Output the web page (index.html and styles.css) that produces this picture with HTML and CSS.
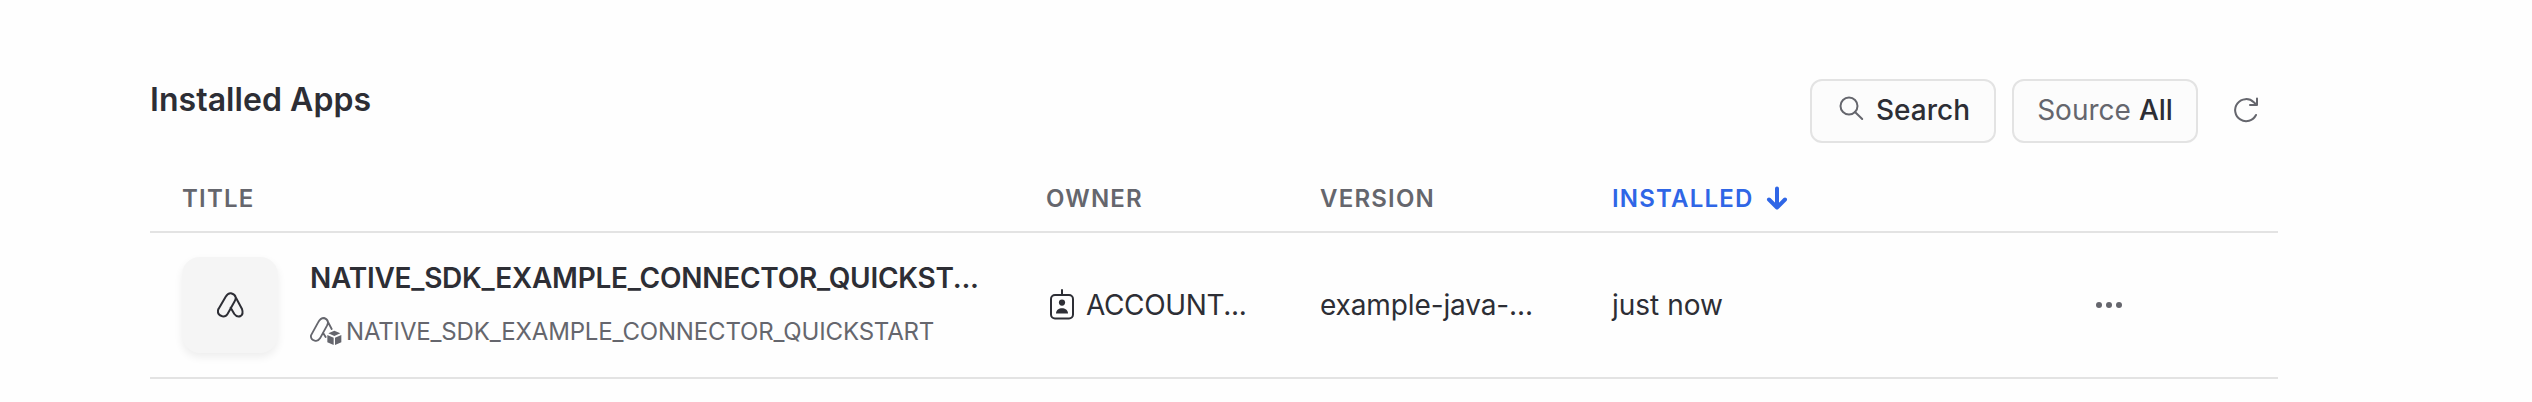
FILE: index.html
```html
<!DOCTYPE html>
<html lang="en">
<head>
<meta charset="utf-8">
<title>Installed Apps</title>
<link rel="stylesheet" href="styles.css">
</head>
<body>
<main class="page">
  <header class="toolbar">
    <h1 class="heading">Installed Apps</h1>
    <div class="actions">
      <button class="btn search"><svg class="icon-search" viewBox="0 0 28 28"><circle cx="11" cy="11" r="8.5"/><path d="M17 17l7.2 7"/></svg><span>Search</span></button>
      <button class="btn"><span class="muted">Source</span> <span>All</span></button>
      <button class="refresh" aria-label="Refresh"><svg class="icon-refresh" viewBox="0 0 28 28"><path d="M24 19A11 11 0 1 1 21.8 6.2L24.5 8.8M25 2.5V9H18"/></svg></button>
    </div>
  </header>
  <section class="table">
    <div class="row head">
      <div class="cell">TITLE</div>
      <div class="cell">OWNER</div>
      <div class="cell">VERSION</div>
      <div class="cell sorted"><span>INSTALLED</span><svg class="icon-arrow" viewBox="0 0 24 26"><path d="M12 3.5V22M4 14.5l8 8 8-8"/></svg></div>
      <div class="cell"></div>
    </div>
    <div class="row item">
      <div class="cell app">
        <div class="tile"><svg class="icon-app" viewBox="0 0 96 96"><path d="M35 23Q42 12 51 13Q63 16 65 25Q66 30 62 37L41 74Q35 84 25 82Q10 78 12 65Q12 62 14 59Z M65 25L84 60Q89 75 80 81Q69 86 61 75L50 56"/></svg></div>
        <div class="names">
          <div class="name">NATIVE_SDK_EXAMPLE_CONNECTOR_QUICKST...</div>
          <div class="db"><svg class="icon-pkg" viewBox="0 0 96 90"><path class="line" d="M24 17Q31 3 42 3Q52 6 54 15Q54 20 51 26L30 64Q24 74 14 71Q1 67 3 55Z M54 15L65 36M39 47L47 60"/><path class="solid" d="M55 49L73 41L91 49L73 57Z M52 54L71 62V84L52 76Z M75 62L94 54V76L75 84Z"/></svg><span>NATIVE_SDK_EXAMPLE_CONNECTOR_QUICKSTART</span></div>
        </div>
      </div>
      <div class="cell owner"><svg class="icon-badge" viewBox="0 0 28 32"><path class="line" d="M13 1v5"/><rect class="line" x="2" y="6" width="22" height="23.5" rx="4"/><circle class="solid" cx="13" cy="13.6" r="3.1"/><path class="solid" d="M7 24.5c0-7 12-7 12 0z"/></svg><span class="owner-name">ACCOUNT...</span></div>
      <div class="cell version">example-java-...</div>
      <div class="cell">just now</div>
      <div class="cell more"><svg class="icon-more" viewBox="0 0 26 6"><circle cx="3" cy="3" r="3"/><circle cx="13" cy="3" r="3"/><circle cx="23" cy="3" r="3"/></svg></div>
    </div>
  </section>
</main>
</body>
</html>
```
FILE: styles.css
```css
* { box-sizing: border-box; }
html, body { margin: 0; height: 402px; background: #fefefe; }
body { font-family: Inter, "Liberation Sans", sans-serif; color: #2d2e35; font-size: 28px; }
button { font: inherit; color: inherit; padding: 0; }
svg { display: block; flex: none; fill: none; stroke: currentColor; stroke-linecap: round; stroke-linejoin: round; }
.page { padding: 79px 254px 0 150px; }
.toolbar { display: flex; justify-content: space-between; height: 86px; }
.heading { margin: 1px 0 0; font-size: 32px; line-height: 40px; font-weight: 600; letter-spacing: .05px; }
.actions { display: flex; height: 64px; }
.btn { display: flex; align-items: center; justify-content: center; gap: 8px; width: 186px; margin-right: 16px; line-height: 36px; padding-bottom: 2px; font-weight: 500; background: #fcfcfc; border: 2px solid #e3e3e3; border-radius: 12px; }
.search { padding-left: 2px; }
.muted { color: #65666d; font-weight: 400; }
.icon-search { width: 28px; height: 28px; stroke-width: 2; color: #65666d; margin: -2px 2px 0 0; }
.refresh { border: 0; background: none; width: 64px; display: flex; align-items: center; justify-content: center; padding-bottom: 2px; }
.icon-refresh { width: 28px; height: 28px; stroke-width: 2; color: #65666d; }
.row { display: grid; grid-template-columns: 864px 274px 292px 478px 1fr; padding-left: 32px; align-items: center; border-bottom: 2px solid #e3e3e3; }
.head { height: 68px; padding-top: 2px; color: #65666d; font-size: 24px; line-height: 32px; font-weight: 600; letter-spacing: 1.2px; }
.item { height: 146px; line-height: 36px; }
.sorted { display: flex; align-items: center; gap: 11px; color: #2f66e6; }
.icon-arrow { width: 24px; height: 26px; stroke-width: 4; margin-top: -3px; }
.app { display: flex; align-items: center; }
.tile { width: 96px; height: 96px; margin-right: 32px; border-radius: 18px; background: #f5f5f5; box-shadow: 0 4px 8px rgba(0, 0, 0, .07); display: flex; align-items: center; justify-content: center; }
.icon-app { width: 32px; height: 32px; stroke-width: 6; }
.names { width: 690px; white-space: nowrap; }
.name { font-weight: 600; letter-spacing: -.25px; line-height: 36px; margin-top: -2px; }
.db { display: flex; align-items: center; color: #65666d; font-size: 24px; line-height: 32px; letter-spacing: -.16px; margin-top: 20px; }
.icon-pkg { width: 32px; height: 30px; margin-right: 4px; stroke-width: 5.5; }
.line { stroke-width: inherit; }
.solid { fill: currentColor; stroke: none; }
.owner { display: flex; align-items: center; }
.owner-name { letter-spacing: -.35px; }
.version { letter-spacing: -.12px; }
.icon-badge { width: 28px; height: 32px; stroke-width: 2; margin: 0 9px 0 3px; }
.icon-more { width: 26px; height: 6px; fill: #65666d; stroke: none; margin-left: 6px; }
```
